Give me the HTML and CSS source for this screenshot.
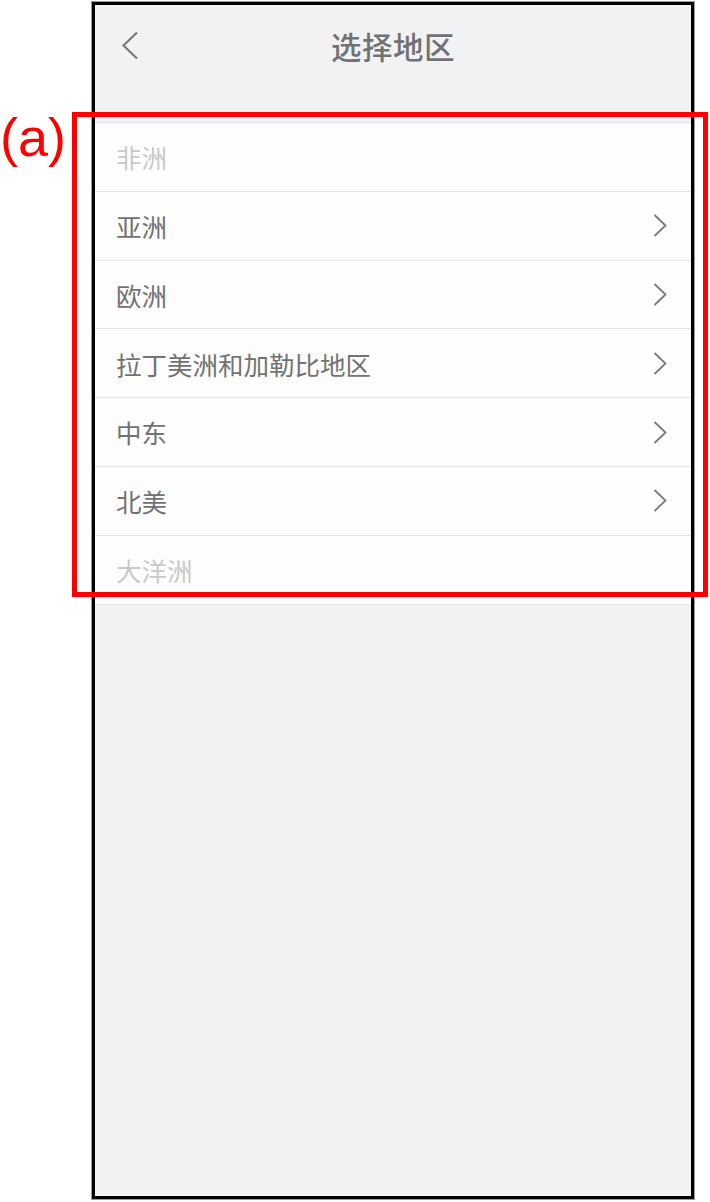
FILE: index.html
```html
<!DOCTYPE html>
<html lang="zh">
<head>
<meta charset="utf-8">
<link rel="stylesheet" href="styles.css">
</head>
<body>
<div class="stage">
  <div class="phone">
    <div class="navbar">
      <svg class="back" width="18" height="29" viewBox="0 0 18 29"><path d="M16 1.5 L2.5 14.5 L16 27.5" fill="none" stroke="#7a7a7a" stroke-width="2.2"/></svg>
      <div class="title">选择地区</div>
    </div>
    <ul class="list">
      <li class="row disabled"><span>非洲</span></li>
      <li class="row"><span>亚洲</span><svg class="chev" width="14" height="23" viewBox="0 0 14 23"><path d="M1.5 1 L12.5 11.5 L1.5 22" fill="none" stroke="#7a7a7a" stroke-width="1.8"/></svg></li>
      <li class="row"><span>欧洲</span><svg class="chev" width="14" height="23" viewBox="0 0 14 23"><path d="M1.5 1 L12.5 11.5 L1.5 22" fill="none" stroke="#7a7a7a" stroke-width="1.8"/></svg></li>
      <li class="row"><span>拉丁美洲和加勒比地区</span><svg class="chev" width="14" height="23" viewBox="0 0 14 23"><path d="M1.5 1 L12.5 11.5 L1.5 22" fill="none" stroke="#7a7a7a" stroke-width="1.8"/></svg></li>
      <li class="row"><span>中东</span><svg class="chev" width="14" height="23" viewBox="0 0 14 23"><path d="M1.5 1 L12.5 11.5 L1.5 22" fill="none" stroke="#7a7a7a" stroke-width="1.8"/></svg></li>
      <li class="row"><span>北美</span><svg class="chev" width="14" height="23" viewBox="0 0 14 23"><path d="M1.5 1 L12.5 11.5 L1.5 22" fill="none" stroke="#7a7a7a" stroke-width="1.8"/></svg></li>
      <li class="row disabled"><span>大洋洲</span></li>
    </ul>
  </div>
  <div class="label">(a)</div>
  <div class="highlight"></div>
</div>
</body>
</html>
```

FILE: styles.css
```css
html, body {
  margin: 0;
  padding: 0;
  background: #ffffff;
}
.stage {
  position: relative;
  width: 710px;
  height: 1202px;
  padding-top: 2px;
  box-sizing: border-box;
}
.phone {
  margin-left: 92px;
  width: 602px;
  height: 1197px;
  box-sizing: border-box;
  border: 3px solid #000;
  box-shadow: 0 0 0 1px #9a9a9a;
  background: #f2f2f4;
  font-family: "Noto Sans CJK SC", "Noto Sans", sans-serif;
}
.navbar {
  position: relative;
  height: 82px;
  display: flex;
  align-items: center;
  justify-content: center;
}
.back {
  position: absolute;
  left: 26px;
  top: 26px;
}
.title {
  font-size: 30.5px;
  font-weight: 500;
  color: #707274;
  line-height: 1;
  letter-spacing: 0.5px;
}
.list {
  list-style: none;
  margin: 35px 0 0 0;
  padding: 0;
  background: #fdfdfd;
  border-bottom: 1px solid #e4e4e4;
}
.row {
  height: 67.8px;
  border-top: 1px solid #e4e4e4;
  display: flex;
  align-items: center;
  justify-content: space-between;
  padding: 0 24px 0 21px;
  font-size: 25.5px;
  color: #727272;
}
.row.disabled {
  color: #c9c9c9;
}
.row span {
  line-height: 1;
}
.chev {
  display: block;
}
.label {
  position: absolute;
  left: 0;
  top: 106px;
  font-family: "Liberation Sans", Arial, sans-serif;
  font-size: 54px;
  line-height: 1.15;
  color: #ff0000;
}
.highlight {
  position: absolute;
  left: 72px;
  top: 112px;
  width: 636px;
  height: 485px;
  box-sizing: border-box;
  border: 5px solid #ff0000;
}
```
